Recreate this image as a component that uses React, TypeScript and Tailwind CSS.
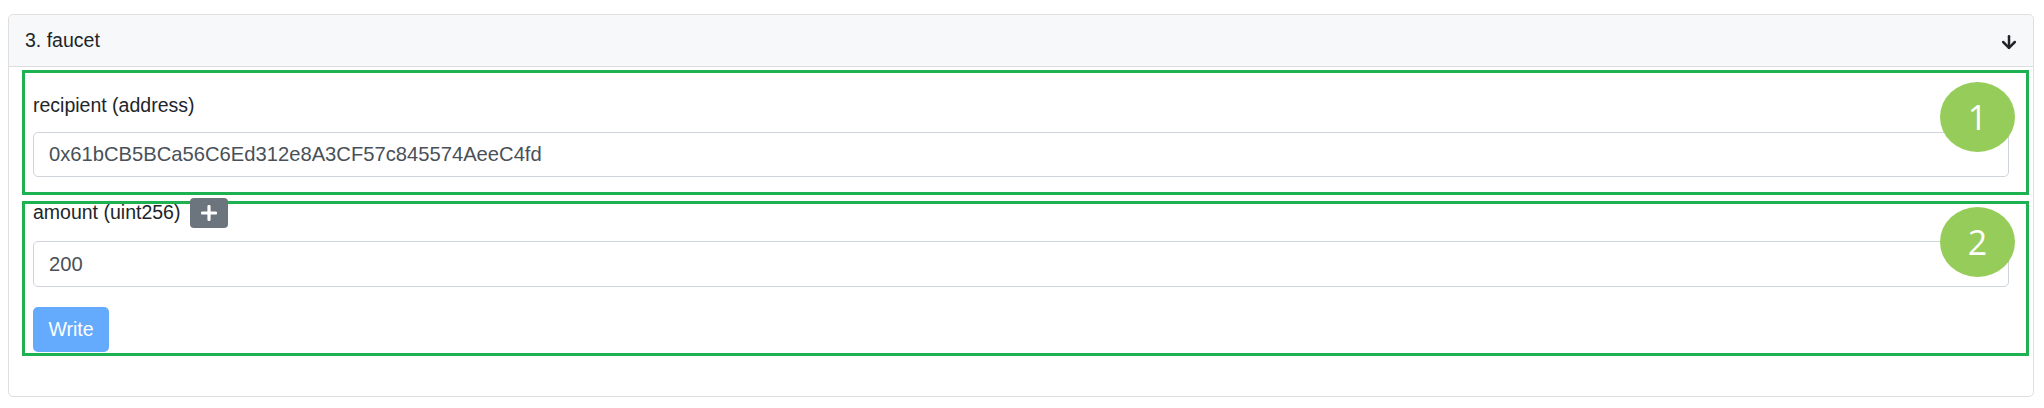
import React from "react";
import { ArrowDown } from "lucide-react";

const font = { fontFamily: '"Liberation Sans", Arial, sans-serif' };

const Marker: React.FC<{ n: string; top: string }> = ({ n, top }) => (
  <div
    className={`absolute right-[11px] ${top} z-10 flex h-[70px] w-[75px] items-center justify-center rounded-[50%] bg-[#96cc5a] text-[34px] text-white`}
    style={{ fontFamily: '"Open Sans", "Noto Sans", sans-serif' }}
  >
    {n}
  </div>
);

const PlusIcon = () => (
  <svg width="16" height="16" viewBox="0 0 16 16">
    <path d="M8 1.5v13M1.5 8h13" stroke="white" strokeWidth="3.2" strokeLinecap="round" />
  </svg>
);

const App: React.FC = () => (
  <div className="h-[408px] w-[2044px] bg-white pt-[14px] pl-[8px]" style={font}>
    <div className="flex h-[383px] w-[2026px] flex-col rounded-[5px] border border-[#dfdfdf]">
      <div className="flex h-[52px] items-center justify-between rounded-t-[5px] border-b border-[#dfdfdf] bg-[#f7f8f9] pl-[16px] pr-[14px] text-[19.5px] text-[#212529]">
        <span>3. faucet</span>
        <ArrowDown size={20} strokeWidth={3} className="mt-[2px]" />
      </div>

      <div className="flex flex-col gap-[6px] pl-[13px] pr-[4px] pt-[3px]">
        {/* recipient */}
        <div className="relative border-[3px] border-[#1db152] pl-[8px] pr-[17px] pt-[18px] pb-[15px]">
          <Marker n="1" top="top-[9px]" />
          <div className="h-[29px] text-[19.5px] leading-[29px] text-[#212529]">recipient (address)</div>
          <div className="mt-[12px] flex h-[45px] items-center rounded-[5px] border border-[#ced4da] pl-[15px] text-[20.2px] text-[#495057]">
            0x61bCB5BCa56C6Ed312e8A3CF57c845574AeeC4fd
          </div>
        </div>

        {/* amount */}
        <div className="relative border-[3px] border-[#1db152] pl-[8px] pr-[17px] pb-[1px]">
          <Marker n="2" top="top-[3px]" />
          <div className="-mt-[6px] flex h-[30px] items-center gap-[10px] text-[19.5px] text-[#212529]">
            <span>amount (uint256)</span>
            <div className="flex h-[30px] w-[38px] items-center justify-center rounded-[4px] bg-[#6c757d]">
              <PlusIcon />
            </div>
          </div>
          <div className="mt-[13px] flex h-[46px] items-center rounded-[5px] border border-[#ced4da] pl-[15px] text-[20.2px] text-[#495057]">
            200
          </div>
          <div className="mt-[20px] flex h-[45px] w-[76px] items-center justify-center rounded-[5px] bg-[#64abfd] text-[19.5px] text-white">
            Write
          </div>
        </div>
      </div>
    </div>
  </div>
);

export default App;
